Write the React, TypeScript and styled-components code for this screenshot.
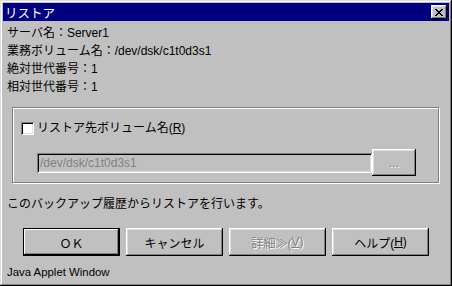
import styled, { createGlobalStyle } from 'styled-components';

const GlobalStyle = createGlobalStyle`
  html, body {
    margin: 0;
    padding: 0;
    background: #c0c0c0;
  }
  * {
    box-sizing: border-box;
  }
`;

const FONT = `"Liberation Sans", "Noto Sans CJK JP", sans-serif`;

const Window = styled.div`
  width: 452px;
  height: 286px;
  padding: 3px;
  display: flex;
  flex-direction: column;
  background: #c0c0c0;
  font-family: ${FONT};
  font-size: 12px;
  color: #000;
  box-shadow: inset -1px -1px #000, inset 1px 1px #dfdfdf, inset -2px -2px #808080,
    inset 2px 2px #fff;
`;

const TitleBar = styled.div`
  height: 18px;
  padding: 0 2px 0 2px;
  display: flex;
  align-items: center;
  justify-content: space-between;
  background: #000080;
  color: #fff;
  font-size: 12.5px;
`;

const CloseButton = styled.div`
  width: 16px;
  height: 14px;
  display: flex;
  align-items: center;
  justify-content: center;
  background: #c0c0c0;
  box-shadow: inset -1px -1px #000, inset 1px 1px #fff, inset -2px -2px #808080,
    inset 2px 2px #dfdfdf;
`;

const Body = styled.div`
  flex: 1;
  display: flex;
  flex-direction: column;
  padding: 3px 4px 0 4px;
`;

const InfoLine = styled.div`
  line-height: 18px;
  height: 18px;
  white-space: nowrap;
`;

const Group = styled.div`
  margin: 11px 0 0 5px;
  width: 427px;
  height: 76px;
  padding: 14px 0 0 8px;
  border: 1px solid #808080;
  box-shadow: inset 1px 1px #fff, 1px 1px #fff;
  display: flex;
  flex-direction: column;
`;

const CheckRow = styled.label`
  display: flex;
  align-items: center;
  gap: 3px;
  height: 13px;
  line-height: 13px;
`;

const CheckBox = styled.span`
  width: 13px;
  height: 13px;
  background: #fff;
  box-shadow: inset 1px 1px #808080, inset -1px -1px #fff, inset 2px 2px #000,
    inset -2px -2px #dfdfdf;
`;

const FieldRow = styled.div`
  margin: 14px 0 0 16px;
  display: flex;
  align-items: center;
`;

const Field = styled.div`
  width: 335px;
  height: 20px;
  padding: 0 0 0 3px;
  display: flex;
  align-items: center;
  color: #808080;
  background: #c0c0c0;
  box-shadow: inset 1px 1px #808080, inset -1px -1px #fff, inset 2px 2px #000,
    inset -2px -2px #dfdfdf;
`;

const Button = styled.div<{ $default?: boolean; $disabled?: boolean; $w: number; $h: number }>`
  width: ${(p) => p.$w}px;
  height: ${(p) => p.$h}px;
  display: flex;
  align-items: center;
  justify-content: center;
  white-space: nowrap;
  background: #c0c0c0;
  color: ${(p) => (p.$disabled ? '#808080' : '#000')};
  text-shadow: ${(p) => (p.$disabled ? '1px 1px #fff' : 'none')};
  box-shadow: ${(p) =>
    p.$default
      ? 'inset 0 0 0 1px #000, inset -2px -2px #000, inset 2px 2px #fff, inset -3px -3px #808080'
      : 'inset -1px -1px #000, inset 1px 1px #fff, inset -2px -2px #808080, inset 2px 2px #dfdfdf'};
`;

const Message = styled.div`
  margin-top: 12px;
  line-height: 18px;
  height: 18px;
`;

const ButtonRow = styled.div`
  margin: 15px 0 0 16px;
  display: flex;
  gap: 6px;
`;

const Mnemonic = styled.span`
  text-decoration: underline;
`;

const Footer = styled.div`
  margin-top: auto;
  padding: 0 0 4px 0;
  line-height: 14px;
  font-size: 11.4px;
  font-family: "Liberation Sans", sans-serif;
`;

const CloseIcon = () => (
  <svg width="8" height="7" viewBox="0 0 8 7" shapeRendering="crispEdges">
    <path
      d="M0 0h2v1h1v1h2V1h1V0h2v1H7v1H6v1H5v1h1v1h1v1h1v1H6V6H5V5H3v1H2v1H0V6h1V5h1V4h1V3H2V2H1V1H0z"
      fill="#000"
    />
  </svg>
);

export default function App() {
  return (
    <>
      <GlobalStyle />
      <Window>
        <TitleBar>
          <span>リストア</span>
          <CloseButton>
            <CloseIcon />
          </CloseButton>
        </TitleBar>
        <Body>
          <InfoLine>サーバ名：Server1</InfoLine>
          <InfoLine>業務ボリューム名：/dev/dsk/c1t0d3s1</InfoLine>
          <InfoLine>絶対世代番号：1</InfoLine>
          <InfoLine>相対世代番号：1</InfoLine>
          <Group>
            <CheckRow>
              <CheckBox />
              <span>
                リストア先ボリューム名(<Mnemonic>R</Mnemonic>)
              </span>
            </CheckRow>
            <FieldRow>
              <Field>/dev/dsk/c1t0d3s1</Field>
              <Button $w={44} $h={27} $disabled>
                ...
              </Button>
            </FieldRow>
          </Group>
          <Message>このバックアップ履歴からリストアを行います。</Message>
          <ButtonRow>
            <Button $w={97} $h={28} $default>
              ＯＫ
            </Button>
            <Button $w={97} $h={28}>
              キャンセル
            </Button>
            <Button $w={97} $h={28} $disabled>
              詳細≫(<Mnemonic>V</Mnemonic>)
            </Button>
            <Button $w={97} $h={28}>
              ヘルプ(<Mnemonic>H</Mnemonic>)
            </Button>
          </ButtonRow>
          <Footer>Java Applet Window</Footer>
        </Body>
      </Window>
    </>
  );
}
